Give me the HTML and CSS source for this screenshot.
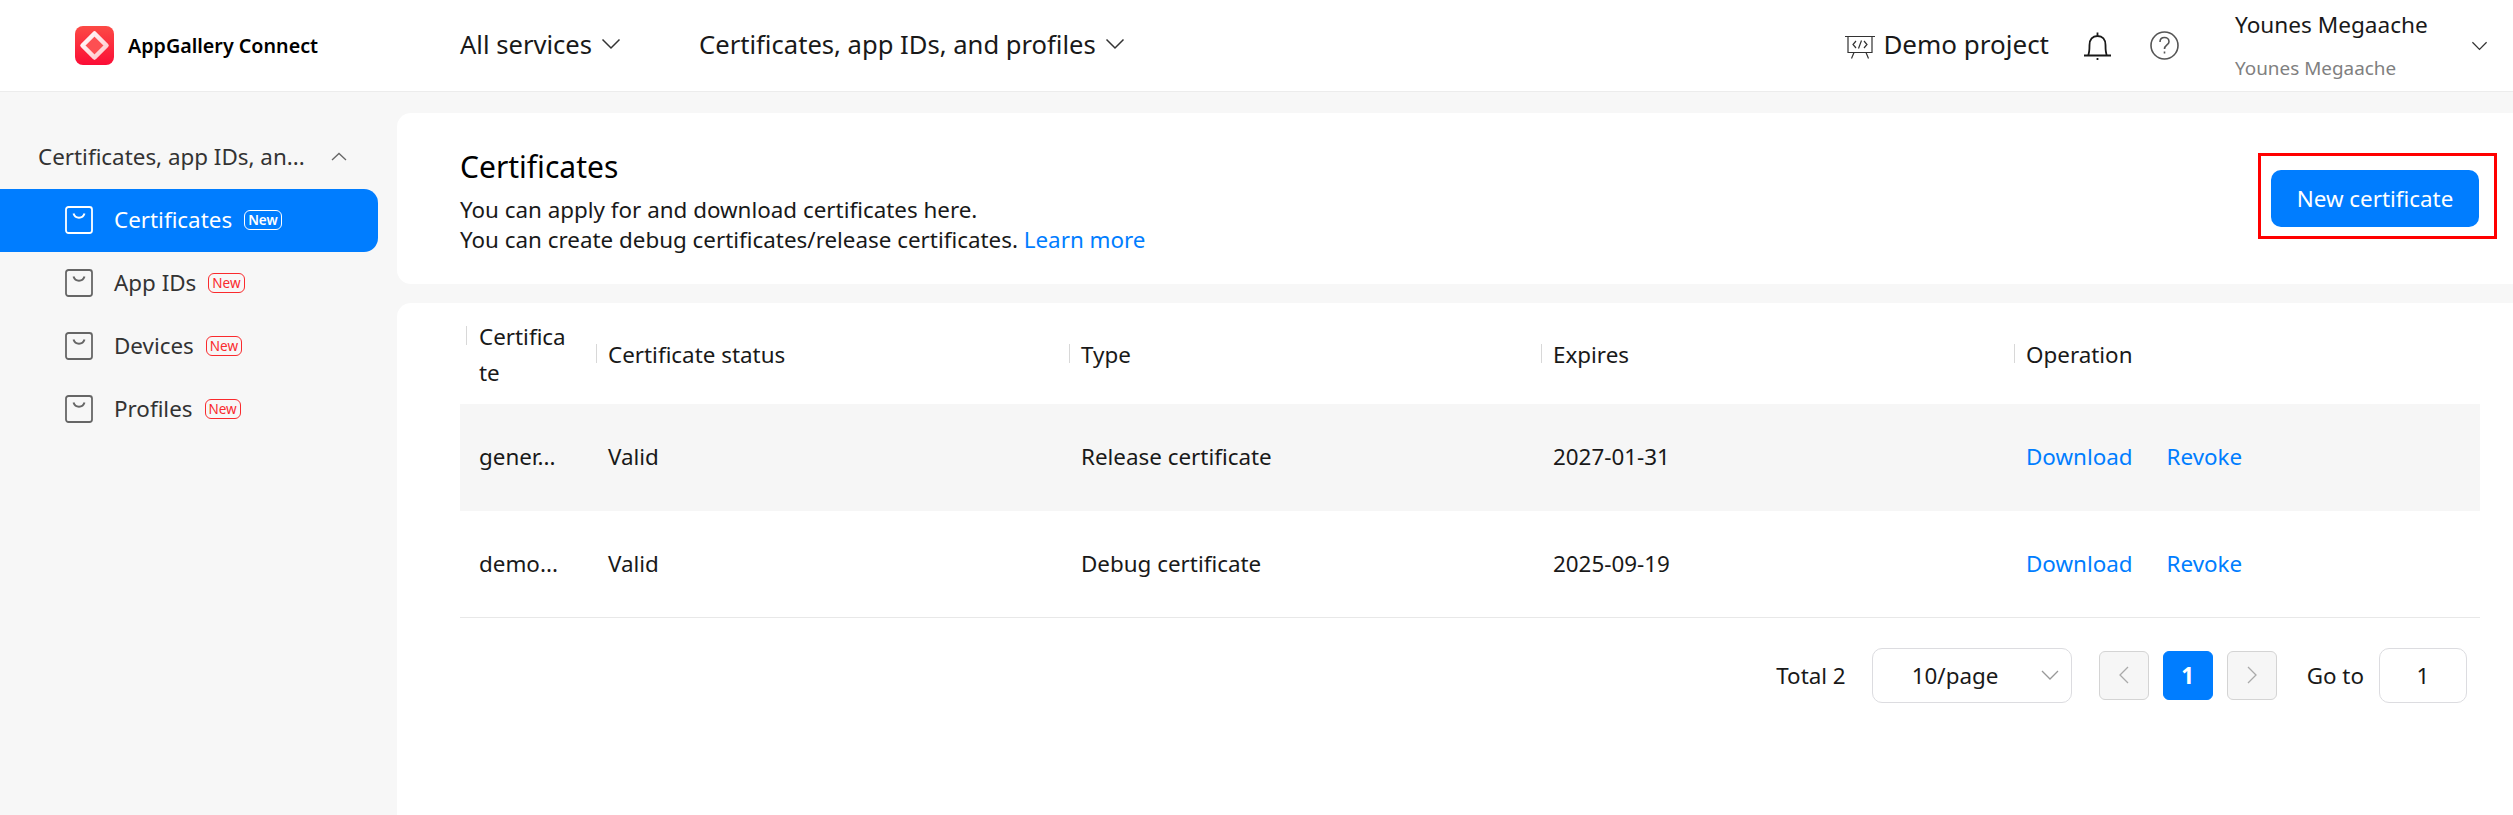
FILE: index.html
```html
<!DOCTYPE html>
<html>
<head>
<meta charset="utf-8">
<title>AppGallery Connect</title>
<link rel="stylesheet" href="styles.css">
</head>
<body>
<svg class="defs">
  <symbol id="bag" viewBox="0 0 28 28">
    <rect x="1" y="1" width="26" height="26" rx="2.5" fill="none" stroke="currentColor" stroke-width="1.800"/>
    <path d="M8.500 7.500c1 3 3.200 4.200 5.500 4.200s4.500-1.200 5.500-4.200" fill="none" stroke="currentColor" stroke-width="2"/>
  </symbol>
</svg>
<header class="topbar">
  <div class="brand">
    <svg class="logo" width="39" height="39" viewBox="0 0 39 39">
      <defs>
        <linearGradient id="lg" x1="0" y1="0" x2="0" y2="1"><stop offset="0" stop-color="#fc4a45"/><stop offset="1" stop-color="#fb0d36"/></linearGradient>
        <linearGradient id="ring" x1="0" y1="0" x2="1" y2="1"><stop offset="0" stop-color="#fff"/><stop offset="1" stop-color="#ffc4c8"/></linearGradient>
      </defs>
      <rect width="39" height="39" rx="8" fill="url(#lg)"/>
      <path d="M19.500 7.500L31.500 19.500L19.500 31.500L7.500 19.500Z" fill="#fd4f52" stroke="url(#ring)" stroke-width="4.500" stroke-linejoin="round"/>
    </svg>
    <span class="brand-name">AppGallery Connect</span>
  </div>
  <nav class="topnav">
    <a class="topnav-item">All services <svg class="chev" width="20" height="12" viewBox="0 0 20 12"><path d="M1.500 1.500L10 10L18.500 1.500" /></svg></a>
    <a class="topnav-item">Certificates, app IDs, and profiles <svg class="chev" width="20" height="12" viewBox="0 0 20 12"><path d="M1.500 1.500L10 10L18.500 1.500" /></svg></a>
  </nav>
  <div class="topright">
    <div class="project">
      <svg class="project-icon" width="30" height="24" viewBox="0 0 30 24" fill="none" stroke="#333" stroke-width="1.200">
        <path d="M0 1.500H30M3 1.500V17.500H27V1.500M9 17.500L6.500 23.500M21 17.500L23.500 23.500"/>
        <path d="M11 6L8 9.500L11 13M19 6L22 9.500L19 13M16.500 5.500L13.500 13.500"/>
      </svg>
      <span>Demo project</span>
    </div>
    <svg class="bell" width="27" height="28" viewBox="0 0 27 28" fill="none" stroke="#191919" stroke-width="1.800">
      <path d="M0 23.500H27M4 23.500C5.500 21 5.500 17 5.500 13C5.500 7.500 8.500 4 13.500 4S21.500 7.500 21.500 13C21.500 17 21.500 21 23 23.500"/>
      <path d="M13.500 0.500V3.500M13.500 26V28"/>
    </svg>
    <svg class="help" width="29" height="29" viewBox="0 0 29 29" fill="none" stroke="#555" stroke-width="1.600">
      <circle cx="14.500" cy="14.500" r="13.500"/>
      <path d="M10 11C10 8 12 6.500 14.500 6.500S19 8.300 19 10.700C19 14 14.500 14 14.500 18"/>
      <path d="M14.500 20.500V22.500"/>
    </svg>
    <div class="account">
      <div class="account-name">Younes Megaache</div>
      <div class="account-sub">Younes Megaache</div>
    </div>
    <svg class="chev" width="17" height="10" viewBox="0 0 20 12"><path d="M1.500 1.500L10 10L18.500 1.500" /></svg>
  </div>
</header>
<div class="layout">
  <aside class="sidebar">
    <div class="side-title">
      <span>Certificates, app IDs, an...</span>
      <svg width="16" height="9" viewBox="0 0 16 9" fill="none" stroke="#666" stroke-width="1.300"><path d="M1 8L8 1.500L15 8"/></svg>
    </div>
    <a class="side-item active"><svg class="bag" width="28" height="28"><use href="#bag"/></svg><span>Certificates</span><em class="new">New</em></a>
    <a class="side-item"><svg class="bag" width="28" height="28"><use href="#bag"/></svg><span>App IDs</span><em class="new">New</em></a>
    <a class="side-item"><svg class="bag" width="28" height="28"><use href="#bag"/></svg><span>Devices</span><em class="new">New</em></a>
    <a class="side-item"><svg class="bag" width="28" height="28"><use href="#bag"/></svg><span>Profiles</span><em class="new">New</em></a>
  </aside>
  <main class="content">
    <section class="card intro">
      <div class="intro-text">
        <h1>Certificates</h1>
        <p>You can apply for and download certificates here.</p>
        <p>You can create debug certificates/release certificates. <a class="link">Learn more</a></p>
      </div>
      <div class="highlight"><button class="primary">New certificate</button></div>
    </section>
    <section class="card listing">
      <table class="certs">
        <colgroup><col class="c1"><col class="c2"><col class="c3"><col class="c4"><col class="c5"></colgroup>
        <thead>
          <tr>
            <th><span class="th-top">Certifica<br>te</span></th>
            <th><span>Certificate status</span></th>
            <th><span>Type</span></th>
            <th><span>Expires</span></th>
            <th><span>Operation</span></th>
          </tr>
        </thead>
        <tbody>
          <tr class="shade">
            <td>gener...</td><td>Valid</td><td>Release certificate</td><td>2027-01-31</td>
            <td><a class="link op">Download</a><a class="link">Revoke</a></td>
          </tr>
          <tr class="last">
            <td>demo...</td><td>Valid</td><td>Debug certificate</td><td>2025-09-19</td>
            <td><a class="link op">Download</a><a class="link">Revoke</a></td>
          </tr>
        </tbody>
      </table>
      <div class="pager">
        <span class="total">Total 2</span>
        <div class="size">10/page <svg width="18" height="10" viewBox="0 0 18 10" fill="none" stroke="#999" stroke-width="1.300"><path d="M1 1L9 9L17 1"/></svg></div>
        <span class="pg off"><svg width="10" height="18" viewBox="0 0 10 18" fill="none" stroke="#aaa" stroke-width="1.300"><path d="M9 1L1 9L9 17"/></svg></span>
        <span class="pg on">1</span>
        <span class="pg off"><svg width="10" height="18" viewBox="0 0 10 18" fill="none" stroke="#aaa" stroke-width="1.300"><path d="M1 1L9 9L1 17"/></svg></span>
        <span class="goto">Go to</span>
        <div class="goto-box">1</div>
      </div>
    </section>
  </main>
</div>
</body>
</html>
```

FILE: styles.css
```css
html,body{margin:0;height:100%;}
body{
background-color:#f7f7f7;
font-family:"Noto Sans",sans-serif;
font-size:22.4px;
color:#191919;
overflow:hidden;
}
.defs{display:none;}
a{color:inherit;text-decoration:none;}

.topbar{
display:flex;
align-items:center;
height:91px;
background-color:#fff;
border-bottom:1px solid #ececec;
}
.brand{display:flex;align-items:center;width:460px;padding-left:75px;box-sizing:border-box;}
.logo{flex:none;}
.brand-name{margin-left:14px;font-size:19.7px;font-weight:600;color:#000;}
.topnav{display:flex;gap:78px;font-size:25.6px;margin-bottom:3px;}
.topnav-item{display:flex;align-items:center;gap:9px;}
.chev{fill:none;stroke:#333;stroke-width:1.5;}
.topright{display:flex;align-items:center;margin-left:auto;padding-right:25px;}
.project{display:flex;align-items:center;gap:8px;font-size:26px;margin-right:35px;margin-bottom:3px;}
.project-icon{margin-top:6px;}
.bell{margin-right:39px;}
.help{margin-right:56px;}
.account{width:236px;margin-bottom:8px;}
.account-name{font-size:22.6px;line-height:52px;}
.account-sub{font-size:18.9px;line-height:34px;color:#808080;}

.layout{display:flex;height:724px;}
.sidebar{width:397px;flex:none;padding-top:21px;box-sizing:border-box;}
.side-title{
display:flex;align-items:center;justify-content:space-between;
height:76px;padding:11px 50px 0 38px;color:#333;
box-sizing:border-box;
}
.side-item{
display:flex;align-items:center;
height:63px;width:378px;
padding:0 0 2px 65px;
box-sizing:border-box;
color:#333;
}
.bag{color:#666;flex:none;margin-right:21px;}
.new{
font-style:normal;font-size:13.5px;line-height:18px;
border:1px solid #fa2a2d;color:#fa2a2d;
border-radius:6px;padding:0 3px;margin-left:12px;
}
.side-item.active{background-color:#007dff;color:#fff;border-radius:0 14px 14px 0;}
.active .bag{color:#fff;}
.active .new{border-color:#fff;color:#fff;font-weight:600;}

.content{flex:1;display:flex;flex-direction:column;gap:19px;padding-top:21px;min-width:0;}
.card{background-color:#fff;border-radius:14px 0 0 14px;}
.intro{
display:flex;align-items:center;justify-content:space-between;
height:171px;padding:0 16px 0 63px;box-sizing:border-box;
}
.intro-text{padding-top:5px;}
.intro h1{margin:0 0 8px;font-size:30px;font-weight:400;line-height:40px;color:#000;}
.intro p{margin:0;line-height:30px;}
.link{color:#007dff;}
.highlight{border:3px solid #f00;padding:14px 15px 9px 10px;line-height:0;margin-bottom:5px;}
.primary{
width:208px;height:57px;border:0;border-radius:10px;
background-color:#007dff;color:#fff;
font-family:inherit;font-size:22.4px;
}
.listing{flex:1;border-radius:14px 0 0 0;padding:0 33px 0 63px;}
.certs{width:100%;border-collapse:collapse;table-layout:fixed;}
.c1{width:135px;}.c2{width:473px;}.c3{width:472px;}.c4{width:473px;}
.certs th{height:101px;padding:3px 13px 0;box-sizing:border-box;text-align:left;font-weight:400;position:relative;line-height:36px;}
.certs th span{display:block;}
.certs th span::before{content:"";position:absolute;left:1px;top:41px;width:1px;height:19px;background-color:#d8d8d8;}
.certs th .th-top::before{top:23px;left:6px;}
.certs td{height:107px;padding:0 13px 3px;box-sizing:border-box;}
.certs th:first-child,.certs td:first-child{padding-left:19px;padding-right:0;}
.shade td{background-color:#f6f6f6;}
.certs .last td{height:106px;padding-bottom:0;border-bottom:1px solid #e8e8e8;}
.op{margin-right:34px;}

.pager{display:flex;align-items:center;justify-content:flex-end;margin-top:30px;padding-right:13px;}
.total{margin-right:26px;}
.size{
display:flex;align-items:center;justify-content:space-between;
width:200px;height:55px;box-sizing:border-box;
border:1px solid #dcdce0;border-radius:10px;
padding:0 12px 0 39px;margin-right:27px;
}
.pg{
display:flex;align-items:center;justify-content:center;
width:50px;height:49px;box-sizing:border-box;
border:1px solid #d4d4d4;border-radius:6px;
margin-right:14px;
}
.pg.off{background-color:#f6f6f6;}
.pg.on{background-color:#007dff;border-color:#007dff;color:#fff;font-weight:700;}
.goto{margin-left:16px;margin-right:15px;}
.goto-box{
width:88px;height:55px;box-sizing:border-box;
border:1px solid #dcdce0;border-radius:10px;
display:flex;align-items:center;justify-content:center;
}
```
